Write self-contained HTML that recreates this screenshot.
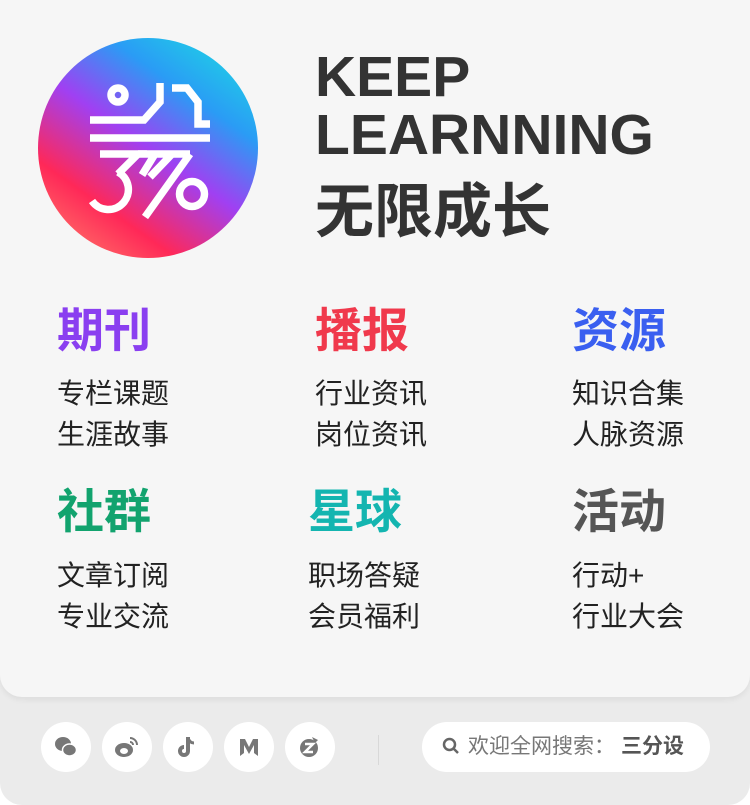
<!DOCTYPE html>
<html><head><meta charset="utf-8"><style>
*{margin:0;padding:0;box-sizing:border-box}
body{width:750px;height:805px;background:#fff;font-family:"Liberation Sans","Noto Sans CJK SC",sans-serif;overflow:hidden}
.outer{position:absolute;left:0;top:0;width:750px;height:805px;background:#ebebeb;border-radius:0 0 22px 22px}
.card{position:absolute;left:0;top:0;width:750px;height:697px;background:#f6f6f6;border-radius:0 0 22px 22px;box-shadow:0 3px 6px rgba(0,0,0,.06)}
.logo{position:absolute;left:38px;top:38px;width:220px;height:220px;border-radius:50%;
background:linear-gradient(215deg,#1fd0e6 8%,#2a9cf5 28%,#a040f2 50%,#ff2858 74%,#ff8c6c 100%)}
.t{position:absolute;left:315px;color:#333;font-weight:bold}
.h{position:absolute;font-size:47px;font-weight:bold;line-height:52px}
.i{position:absolute;font-size:28px;color:#222;line-height:41px}
.ic{position:absolute;top:722px;width:50px;height:50px;border-radius:50%;background:#fff;display:flex;align-items:center;justify-content:center}
.search{position:absolute;left:422px;top:722px;width:288px;height:50px;border-radius:25px;background:#fff;font-size:21px;color:#777;line-height:50px;padding-left:20px;white-space:nowrap}
</style></head><body>
<div class="outer"></div>
<div class="card"></div>
<div class="logo">
<svg width="220" height="220" viewBox="0 0 220 220" fill="none" stroke="#fff" stroke-width="7.5" stroke-linejoin="miter">
<circle cx="80" cy="57" r="7"/>
<path d="M52 82 H106 L122 64 V45"/>
<path d="M134 50 H149 L160 64 V86 H172"/>
<path d="M52 100 H172"/>
<path d="M62 116 H100 L80 136"/>
<path d="M80 134 A20 20 0 1 1 54 163"/>
<path d="M100 116 H152 M117 116 L104 137 M134 116 L112 139 M152 116 L107 179"/>
<circle cx="154" cy="156" r="12.5"/>
</svg>
</div>
<div class="t" style="top:46px;font-size:57px;line-height:62px">KEEP</div>
<div class="t" style="top:104px;font-size:57px;line-height:62px">LEARNNING</div>
<div class="t" style="top:180px;font-size:59px;line-height:64px">无限成长</div>

<div class="h" style="left:57px;top:305px;color:#8a3ff0">期刊</div>
<div class="h" style="left:315px;top:305px;color:#f0394c">播报</div>
<div class="h" style="left:572px;top:305px;color:#3a5ff0">资源</div>
<div class="i" style="left:57px;top:373px">专栏课题<br>生涯故事</div>
<div class="i" style="left:315px;top:373px">行业资讯<br>岗位资讯</div>
<div class="i" style="left:572px;top:373px">知识合集<br>人脉资源</div>

<div class="h" style="left:57px;top:486px;color:#12a36e">社群</div>
<div class="h" style="left:308px;top:486px;color:#14b5b0">星球</div>
<div class="h" style="left:572px;top:486px;color:#555">活动</div>
<div class="i" style="left:57px;top:555px">文章订阅<br>专业交流</div>
<div class="i" style="left:308px;top:555px">职场答疑<br>会员福利</div>
<div class="i" style="left:572px;top:555px">行动+<br>行业大会</div>

<div class="ic" style="left:41px"><svg width="24" height="24" viewBox="0 0 24 24" fill="#777"><ellipse cx="9" cy="9" rx="8" ry="7"/><ellipse cx="15.5" cy="15" rx="7" ry="6" fill="#777" stroke="#fff" stroke-width="1.5"/></svg></div>
<div class="ic" style="left:102px"><svg width="26" height="24" viewBox="0 0 26 24"><ellipse cx="10" cy="15" rx="9" ry="7" fill="#777"/><ellipse cx="10" cy="16" rx="4" ry="3" fill="#fff"/><path d="M16 3a7 7 0 0 1 7 7M16 7a3 3 0 0 1 3 3" stroke="#777" stroke-width="2" fill="none"/></svg></div>
<div class="ic" style="left:163px"><svg width="22" height="24" viewBox="0 0 22 24"><path d="M11 2v14a4 4 0 1 1-4-4" stroke="#777" stroke-width="4" fill="none"/><path d="M11 3c1 3 3 5 6 5" stroke="#777" stroke-width="3" fill="none"/></svg></div>
<div class="ic" style="left:224px"><svg width="22" height="22" viewBox="0 0 22 22"><path d="M2 20V3l5 0 4 8 4-8 5 0v17l-4-3V9l-5 9-5-9v8z" fill="#777"/></svg></div>
<div class="ic" style="left:285px"><svg width="24" height="24" viewBox="0 0 24 24"><circle cx="11" cy="13" r="9" fill="#777"/><path d="M14 2l6 3-3 3" fill="#777"/><path d="M7 9h8l-8 8h8" stroke="#fff" stroke-width="2.5" fill="none"/></svg></div>
<div style="position:absolute;left:378px;top:735px;width:1px;height:30px;background:#d8d8d8"></div>
<div class="search"><svg width="18" height="18" viewBox="0 0 18 18" style="vertical-align:-2px;margin-right:8px"><circle cx="7.5" cy="7.5" r="5.5" stroke="#666" stroke-width="2.5" fill="none"/><path d="M11.5 11.5l4.5 4.5" stroke="#666" stroke-width="2.5"/></svg>欢迎全网搜索：<b style="color:#555;margin-left:6px">三分设</b></div>
</body></html>
